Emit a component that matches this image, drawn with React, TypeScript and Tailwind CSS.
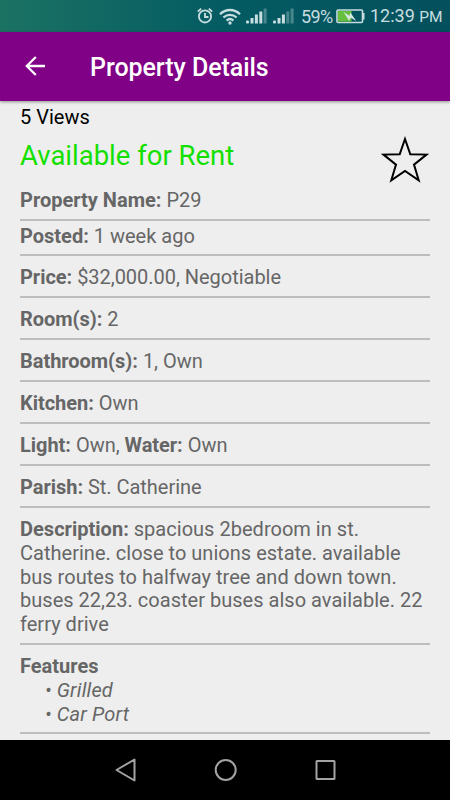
import React from "react";

const details = [
  [["Price:", "$32,000.00, Negotiable"]],
  [["Room(s):", "2"]],
  [["Bathroom(s):", "1, Own"]],
  [["Kitchen:", "Own"]],
  [["Light:", "Own, "], ["Water:", "Own"]],
  [["Parish:", "St. Catherine"]],
];

const description = [
  "spacious 2bedroom in st.",
  "Catherine. close to unions estate. available",
  "bus routes to halfway tree and down town.",
  "buses 22,23. coaster buses also available. 22",
  "ferry drive",
];

function Signal({ bars }: { bars: number }) {
  return (
    <svg width="22" height="16" viewBox="0 0 22 16" fill="#c8dde0">
      <rect x="0" y="12.5" width="3" height="3" rx="1" />
      <rect x="4.5" y="10" width="3" height="5.5" />
      <rect x="8.9" y="6.5" width="3" height="9" />
      <rect x="13.3" y="3.5" width="3" height="12" opacity={bars > 3 ? 1 : 0.35} />
      <rect x="17.6" y="0.5" width="3" height="15" opacity="0.35" />
    </svg>
  );
}

function StatusBar() {
  return (
    <div className="flex h-8 shrink-0 items-center bg-linear-to-r from-[#1b7263] via-[#045b62] to-[#04505c] pl-[196px] text-[#c8dde0]">
      <svg width="18" height="18" viewBox="0 0 18 18" fill="none" stroke="currentColor" strokeWidth="1.8">
        <circle cx="9" cy="9.4" r="6.1" />
        <path d="M9 6v4h3.5M1.8 4.6 5.2 1.6M16.2 4.6 12.8 1.6" />
      </svg>
      <svg className="ml-[5px]" width="22" height="17" viewBox="0 0 22 17" fill="none" stroke="currentColor" strokeWidth="2.3">
        <path d="M1 6.2C6.6.6 15.4.6 21 6.2M4.4 9.5c3.8-3.6 9.4-3.6 13.2 0M7.6 12.6c2-1.8 4.8-1.8 6.8 0" />
        <circle cx="11" cy="15" r="1.7" fill="currentColor" stroke="none" />
      </svg>
      <div className="ml-[5px] flex gap-[5px]">
        <Signal bars={4} />
        <Signal bars={3} />
      </div>
      <span className="ml-[6px] w-[35px] pt-px text-[18px] tracking-[-0.6px]">59%</span>
      <svg width="29" height="16" viewBox="0 0 29 16">
        <rect x="1" y="2" width="25.5" height="12.5" rx="1" fill="none" stroke="#c8dde0" strokeWidth="1.6" />
        <path d="M27.6 5v6.5" stroke="#c8dde0" strokeWidth="1.8" />
        <rect x="2" y="3" width="13.5" height="10.5" fill="#66bf3c" />
        <path d="m7.5 4 6 3.8.8-3.3 6 8.5-5.6-3.2-1.7 3z" fill="#d5e6e4" />
      </svg>
      <span className="ml-[5px] whitespace-nowrap pt-px text-[18px]">
        12:39 <span className="text-[15.5px]">PM</span>
      </span>
    </div>
  );
}

export default function App() {
  return (
    <div className="flex h-[800px] w-[450px] flex-col overflow-hidden bg-[#eeeeee] font-['Roboto',sans-serif] text-[20px] leading-[23.75px] text-[#666666]">
      <StatusBar />
      <header className="z-10 flex h-[69px] shrink-0 items-center bg-[#800086] pl-[25px] text-white shadow-[0_1px_3px_rgba(0,0,0,0.4)]">
        <svg className="mb-px" width="20" height="20" viewBox="0 0 20 20" fill="none" stroke="currentColor" strokeWidth="2.3">
          <path d="M20 10H2M10.8 1 1.8 10l9 9" />
        </svg>
        <h1 className="ml-[45px] pt-[3px] text-[25px] font-medium tracking-[-0.05px]">Property Details</h1>
      </header>

      <main className="flex-1 overflow-hidden px-5">
        <p className="h-[27px] pt-[5px] text-black">5 Views</p>
        <div className="flex h-[60px] justify-between">
          <h2 className="pt-3 text-[27.5px] leading-8 text-[#14e000]">Available for Rent</h2>
          <svg className="mt-[8px]" width="50" height="48" viewBox="0 0 50 48" fill="none" stroke="#000" strokeWidth="2">
            <path d="M25 3 30.3 18.3 46.5 18.6 34 28.6 38.7 44.3 25 35 11.3 44.3 16 28.6 3.5 18.6 19.7 18.3z" />
          </svg>
        </div>
        <div className="h-[33px] border-b-2 border-[#bdbdbd] pt-px">
          <b>Property Name:</b> P29
        </div>
        <div className="h-[35px] border-b-2 border-[#bdbdbd] pt-[4px]">
          <b>Posted:</b> 1 week ago
        </div>
        {details.map((fields) => (
          <div key={fields[0][0]} className="h-[42px] whitespace-pre border-b-2 border-[#bdbdbd] pt-[10px] tracking-[-0.03px]">
            {fields.map(([label, value]) => (
              <span key={label}>
                <b>{label}</b> {value}
              </span>
            ))}
          </div>
        ))}
        <div className="h-[137px] whitespace-nowrap border-b-2 border-[#bdbdbd] pt-[10px] tracking-[0.02px]">
          <b>Description:</b>{" "}
          {description.map((line) => (
            <React.Fragment key={line}>
              {line}
              <br />
            </React.Fragment>
          ))}
        </div>
        <div className="h-[89px] border-b-2 border-[#bdbdbd] pt-[10px]">
          <b>Features</b>
          <ul className="pl-[25px] italic tracking-[0.15px]">
            <li>• Grilled</li>
            <li>• Car Port</li>
          </ul>
        </div>
      </main>

      <nav className="flex h-[60px] shrink-0 items-center bg-black pl-[114px] text-[#a3a3a3]">
        <svg width="24" height="26" viewBox="0 0 24 26" fill="none" stroke="currentColor" strokeWidth="2" strokeLinejoin="round">
          <path d="M20.5 2.5v21L2.5 13z" />
        </svg>
        <svg className="ml-[76px]" width="24" height="24" viewBox="0 0 24 24" fill="none" stroke="currentColor" strokeWidth="2">
          <circle cx="11.7" cy="12" r="10" />
        </svg>
        <svg className="ml-[76px]" width="24" height="24" viewBox="0 0 24 24" fill="none" stroke="currentColor" strokeWidth="2">
          <rect x="2.5" y="3" width="18" height="18" rx="0.5" />
        </svg>
      </nav>
    </div>
  );
}
